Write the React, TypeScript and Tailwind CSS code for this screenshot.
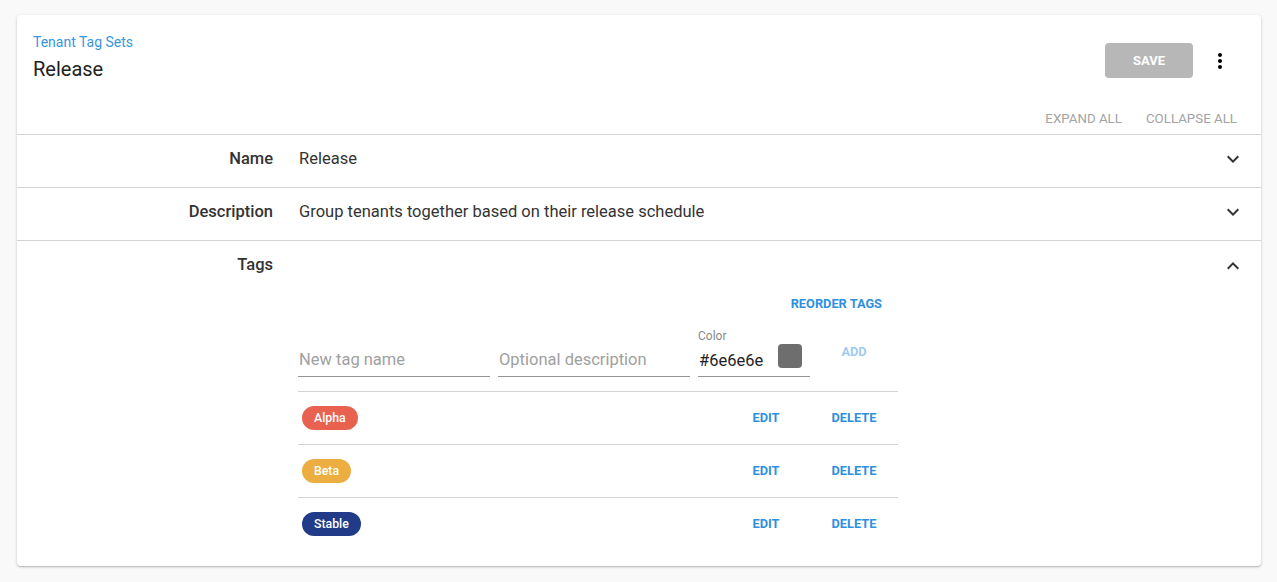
const font = { fontFamily: 'Roboto, "Liberation Sans", sans-serif' }

function ChevronDown() {
  return (
    <svg width="24" height="24" viewBox="0 0 24 24" className="fill-[#333]">
      <path d="M16.59 8.59L12 13.17 7.41 8.59 6 10l6 6 6-6z" />
    </svg>
  )
}

function ChevronUp() {
  return (
    <svg width="24" height="24" viewBox="0 0 24 24" className="fill-[#333]">
      <path d="M12 8l-6 6 1.41 1.41L12 10.83l4.59 4.58L18 14z" />
    </svg>
  )
}

function MoreVert() {
  return (
    <svg width="24" height="24" viewBox="0 0 24 24" className="fill-black">
      <path d="M12 8c1.1 0 2-.9 2-2s-.9-2-2-2-2 .9-2 2 .9 2 2 2zm0 2c-1.1 0-2 .9-2 2s.9 2 2 2 2-.9 2-2-.9-2-2-2zm0 6c-1.1 0-2 .9-2 2s.9 2 2 2 2-.9 2-2-.9-2-2-2z" />
    </svg>
  )
}

const tags = [
  { name: 'Alpha', color: 'bg-[#e8624f]' },
  { name: 'Beta', color: 'bg-[#ecae40]' },
  { name: 'Stable', color: 'bg-[#213b89]' },
]

function Row({ label, value }: { label: string; value: string }) {
  return (
    <div className="flex h-[53px] border-t border-[#d3d3d3]">
      <div className="w-[256px] pt-[12px] text-right text-[16.5px] leading-6 font-medium text-[#333]">{label}</div>
      <div className="ml-[26px] pt-[12px] text-[16.5px] leading-6 text-[#333]">{value}</div>
      <div className="ml-auto pr-4 pt-[12px]">
        <ChevronDown />
      </div>
    </div>
  )
}

export default function App() {
  return (
    <div className="min-h-[582px] bg-[#f9f9f9] pt-[15px] pl-[17px] pr-[16px]" style={font}>
      <div className="rounded bg-white pb-4 shadow-[0_1px_3px_rgba(0,0,0,0.2),0_1px_1px_rgba(0,0,0,0.12)]">
        {/* Header */}
        <div className="flex h-[87px] justify-between pl-4 pr-[17px] pt-[17px]">
          <div>
            <div className="text-[14px] leading-5 text-[#3796e0]">Tenant Tag Sets</div>
            <div className="mt-[3px] text-[20px] leading-7 text-[#222]">Release</div>
          </div>
          <div className="mt-[5px] flex h-12 items-center gap-[3px]">
            <button className="mb-px h-[35px] w-[88px] rounded bg-[#b7b7b7] text-[13px] font-bold text-white">SAVE</button>
            <button className="flex h-12 w-12 items-center justify-center">
              <MoreVert />
            </button>
          </div>
        </div>
        <div className="flex h-8 items-center justify-end gap-2 pt-[2px] pr-4">
          <button className="px-2 text-[13.3px] text-[#a3a3a3]">EXPAND ALL</button>
          <button className="px-2 text-[13.3px] text-[#a3a3a3]">COLLAPSE ALL</button>
        </div>

        <Row label="Name" value="Release" />
        <Row label="Description" value="Group tenants together based on their release schedule" />

        {/* Tags */}
        <div className="flex border-t border-[#d3d3d3]">
          <div className="w-[256px] pt-[12px] text-right text-[16.5px] leading-6 font-medium text-[#333]">Tags</div>
          <div className="ml-[25px] w-[600px] pt-[45px]">
            <div className="flex justify-end">
              <button className="h-9 px-4 text-[12.8px] font-bold text-[#2f90e0]">REORDER TAGS</button>
            </div>
            <div className="mt-[6px] flex items-center">
              <div className="flex gap-2">
                <div className="w-[192px] pt-4">
                  <div className="h-[33px] border-b border-[#949494] pt-[4px] pl-px text-[16.5px] leading-6 text-[#a0a0a0]">New tag name</div>
                </div>
                <div className="w-[192px] pt-4">
                  <div className="h-[33px] border-b border-[#949494] pt-[4px] pl-px text-[16.5px] leading-6 text-[#a0a0a0]">Optional description</div>
                </div>
                <div className="w-[112px]">
                  <div className="text-[12px] leading-4 text-[#8a8a8a]">Color</div>
                  <div className="flex h-[33px] items-start justify-between border-b border-[#949494] pr-2 pl-px">
                    <span className="pt-[5px] text-[16.5px] leading-6 text-[#222]">#6e6e6e</span>
                    <span className="h-6 w-6 rounded bg-[#6e6e6e]" />
                  </div>
                </div>
              </div>
              <div className="flex w-[88px] justify-center">
                <button className="mb-px text-[12.8px] font-bold text-[#9fcbf2]">ADD</button>
              </div>
            </div>
            <div className="mt-[14px]">
              {tags.map((t) => (
                <div key={t.name} className="flex h-[53px] items-center border-t border-[#d3d3d3] pl-1">
                  <span className={`${t.color} flex h-6 items-center rounded-full px-3 text-[12.3px] font-medium text-white`}>{t.name}</span>
                  <div className="ml-auto flex items-center">
                    <button className="w-[60px] text-center text-[12.8px] font-bold text-[#2f90e0]">EDIT</button>
                    <button className="ml-[14px] w-[88px] text-center text-[12.8px] font-bold text-[#2f90e0]">DELETE</button>
                  </div>
                </div>
              ))}
            </div>
          </div>
          <div className="ml-auto pr-4 pt-[13px]">
            <ChevronUp />
          </div>
        </div>
      </div>
    </div>
  )
}
